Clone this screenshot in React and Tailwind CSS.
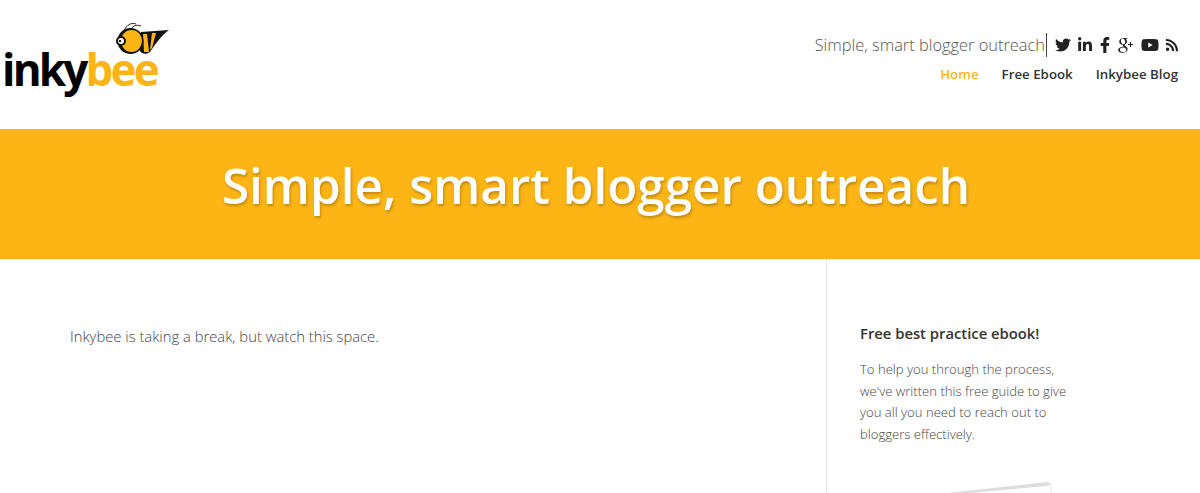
import React from 'react'
import { FaTwitter, FaLinkedinIn, FaFacebookF, FaYoutube, FaRss } from 'react-icons/fa'
import { TiSocialGooglePlus } from 'react-icons/ti'

const socials = [
  { icon: FaTwitter, cls: 'w-[16px] h-[16px]' },
  { icon: FaLinkedinIn, cls: 'w-[16px] h-[16px]' },
  { icon: FaFacebookF, cls: 'w-[12px] h-[16px]' },
  { icon: TiSocialGooglePlus, cls: 'w-[24px] h-[24px] -ml-[4px] -mr-[2px]' },
  { icon: FaYoutube, cls: 'w-[18px] h-[18px]' },
  { icon: FaRss, cls: 'w-[14px] h-[14px]' },
]

function Bee() {
  return (
    <svg viewBox="0 0 56 38" className="absolute left-[114px] top-[21px] w-[56px] h-[38px]">
      {/* antennae */}
      <path d="M10 10 C12 4 18 1 22 3 M16 10 C18 5 22 3 27 5" fill="none" stroke="#222" strokeWidth="1" />
      {/* wing/body */}
      <path d="M27 11 L55 9 C48 14 42 22 36 31 C32 34 28 33 26 30 Z" fill="#111" />
      <path d="M29 13 L33 13 L35 31 L30 31 Z" fill="#fdb515" />
      <path d="M38 12 L42 12 L38 27 L36 29 Z" fill="#fdb515" />
      {/* head */}
      <circle cx="16.5" cy="20" r="13" fill="#111" />
      <ellipse cx="17.5" cy="20" rx="10.5" ry="11" fill="#fdb515" />
      <circle cx="7" cy="20" r="5" fill="#111" />
      <circle cx="7" cy="20" r="3" fill="#fff" />
      <circle cx="6" cy="20" r="1.2" fill="#111" />
    </svg>
  )
}

export default function App() {
  return (
    <div className="h-[493px] overflow-hidden bg-white font-['Open_Sans',sans-serif]">
      {/* Header */}
      <div className="h-[129px] flex justify-between">
        <div className="relative w-[175px] h-full">
          <Bee />
          <div className="pt-[38px] pl-[2px] text-[44px] leading-[62px] font-bold tracking-[-2.8px]">
            <span className="text-black">inky</span>
            <span className="text-[#fdb515]">bee</span>
          </div>
        </div>
        <div className="pt-[32px] pr-[22px] flex flex-col items-end">
          <div className="flex items-center h-[26px]">
            <span className="text-[16.4px] font-light text-[#555] border-r border-[#444] pr-px leading-[24px]">Simple, smart blogger outreach</span>
            <div className="flex items-center gap-[6px] ml-[8px] -mr-px text-[#222]">
              {socials.map((s, idx) => {
                const Icon = s.icon
                return <Icon key={idx} className={s.cls} />
              })}
            </div>
          </div>
          <nav className="flex gap-[23px] mt-[6px] text-[13.3px] font-semibold leading-[20px] text-[#333]">
            <span className="text-[#fdb515]">Home</span>
            <span>Free Ebook</span>
            <span>Inkybee Blog</span>
          </nav>
        </div>
      </div>

      {/* Banner */}
      <div className="h-[130px] bg-[#fdb515] flex items-center justify-center pr-[8px] pb-[18px]">
        <h1 className="text-[49.4px] font-semibold text-white [text-shadow:1px_2px_3px_rgba(0,0,0,0.25)]">Simple, smart blogger outreach</h1>
      </div>

      {/* Content */}
      <div className="flex h-[234px]">
        <div className="w-[827px] pl-[70px] pt-[65px] border-r border-[#e8e8e8]">
          <p className="text-[14.8px] font-light leading-[24px] text-[#444]">Inkybee is taking a break, but watch this space.</p>
        </div>
        <div className="pl-[33px] pt-[63px] w-[240px]">
          <h3 className="text-[14.8px] font-semibold leading-[22px] text-[#333] whitespace-nowrap">Free best practice ebook!</h3>
          <p className="mt-[15px] text-[13.1px] font-light leading-[21.5px] text-[#444] whitespace-nowrap">
            To help you through the process,<br />
            we've written this free guide to give<br />
            you all you need to reach out to<br />
            bloggers effectively.
          </p>
          <svg viewBox="0 0 104 12" className="mt-[36px] ml-[88px] w-[104px] h-[12px]">
            <path d="M0 12 L100 1 L103 3 L99 5 L0 14 Z" fill="#ddd" />
            <path d="M103 3 L103 12" fill="none" stroke="#e5e5e5" strokeWidth="1" />
          </svg>
        </div>
      </div>
    </div>
  )
}
